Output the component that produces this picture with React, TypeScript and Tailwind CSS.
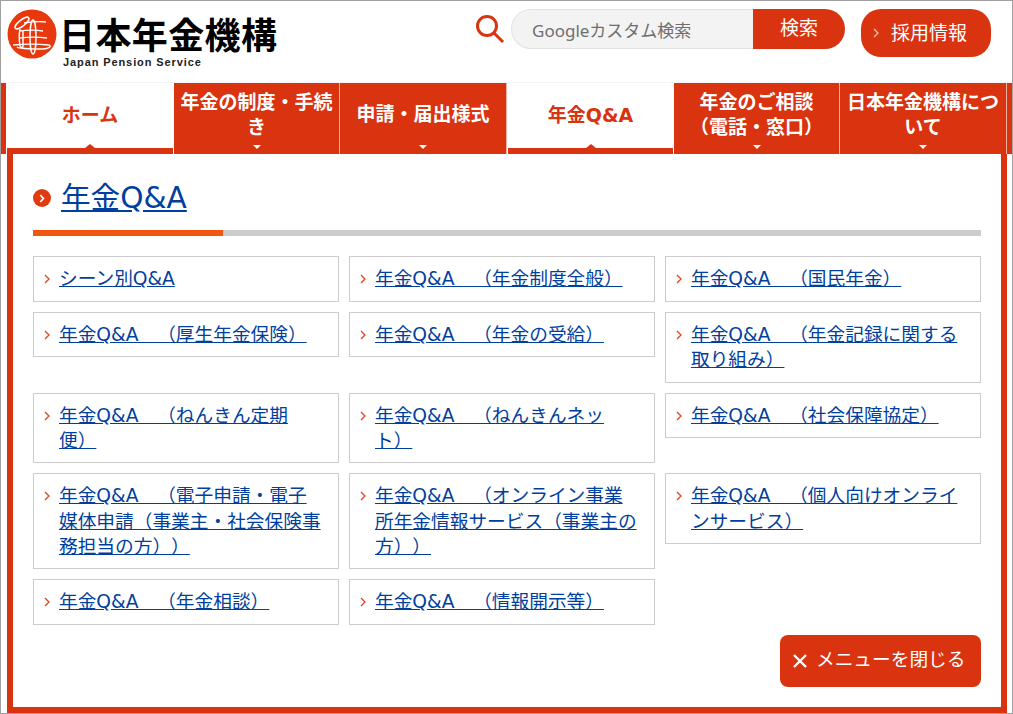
const font = "[font-family:'DejaVu_Sans','Noto_Sans_CJK_JP',sans-serif] [text-spacing-trim:space-all]";

const links: string[][] = [
  ["シーン別Q&A"],
  ["年金Q&A　（年金制度全般）"],
  ["年金Q&A　（国民年金）"],
  ["年金Q&A　（厚生年金保険）"],
  ["年金Q&A　（年金の受給）"],
  ["年金Q&A　（年金記録に関する", "取り組み）"],
  ["年金Q&A　（ねんきん定期", "便）"],
  ["年金Q&A　（ねんきんネッ", "ト）"],
  ["年金Q&A　（社会保障協定）"],
  ["年金Q&A　（電子申請・電子", "媒体申請（事業主・社会保険事", "務担当の方））"],
  ["年金Q&A　（オンライン事業", "所年金情報サービス（事業主の", "方））"],
  ["年金Q&A　（個人向けオンライ", "ンサービス）"],
  ["年金Q&A　（年金相談）"],
  ["年金Q&A　（情報開示等）"],
];

const tabs = [
  { lines: ["ホーム"], active: true, w: "w-[168px]" },
  { lines: ["年金の制度・手続", "き"], active: false, w: "w-[166px]" },
  { lines: ["申請・届出様式"], active: false, w: "w-[167px]" },
  { lines: ["年金Q&A"], active: true, w: "w-[167px]" },
  { lines: ["年金のご相談", "（電話・窓口）"], active: false, w: "w-[166px]" },
  { lines: ["日本年金機構につ", "いて"], active: false, w: "w-[167px]" },
];

function Chevron({ className }: { className: string }) {
  return (
    <svg viewBox="0 0 6 10" className={className} fill="none" stroke="currentColor" strokeWidth="1.3">
      <path d="M1 1l4 4-4 4" />
    </svg>
  );
}

function Logo() {
  return (
    <svg viewBox="0 0 50 50" className="w-[50px] h-[50px] shrink-0">
      <circle cx="25" cy="25" r="24.5" fill="#e8380d" />
      <g fill="none" stroke="#fff" strokeWidth="1.4">
        <ellipse cx="15" cy="14" rx="8.5" ry="3" transform="rotate(-38 15 14)" />
        <path d="M17 14c7-1 15-2 22-1M12 22c8-1 18-1 24 0M13 29c8-1 19-1 27 0" />
        <path d="M6 36c10-1 26-1 36 0 3 1 0 4-6 4-10 0-24 0-26-2" />
        <ellipse cx="26" cy="28" rx="3" ry="17" />
        <path d="M13 20c-1 5-1 11 0 17 1 2 3 2 3 0V21" />
      </g>
    </svg>
  );
}

function Tab({ lines, active, w }: { lines: string[]; active: boolean; w: string }) {
  if (active) {
    return (
      <div className={`${w} relative h-[71px] bg-white flex flex-col`}>
        <div className="flex-1 flex items-center justify-center text-[#d9330f] text-[19px] font-bold pb-[1px]">
          {lines[0]}
        </div>
        <div className="h-[6px] bg-[#d9330f] mx-[1px] relative">
          <span className="absolute left-1/2 -translate-x-1/2 -top-[4px] w-0 h-0 border-x-[5px] border-x-transparent border-b-[4px] border-b-[#d9330f]" />
        </div>
      </div>
    );
  }
  return (
    <div className={`${w} relative h-[71px] bg-[#d9330f] border-r border-r-[#f0b4a4] flex flex-col items-center justify-center text-white text-[19px] font-bold leading-[25px] text-center pb-[8px] whitespace-nowrap`}>
      {lines.map((l) => (
        <div key={l}>{l}</div>
      ))}
      <span className="absolute left-1/2 -translate-x-1/2 bottom-[5px] w-0 h-0 border-x-[4px] border-x-transparent border-t-[4px] border-t-white" />
    </div>
  );
}

export default function App() {
  return (
    <div className={`${font} w-[1013px] h-[714px] bg-white border border-[#a0a0a0] overflow-hidden flex flex-col`}>
      <header className="h-[82px] flex shrink-0 border-b border-b-[#f5f5f5]">
        <div className="pl-[6px] pt-[8px] flex gap-[5px]">
          <Logo />
          <div className="flex flex-col w-[216px]">
            <div className="text-[36px] leading-[36px] mt-[6px] -ml-[3px] font-bold tracking-[0.4px] text-black whitespace-nowrap [font-family:'Noto_Sans_CJK_JP',sans-serif]">日本年金機構</div>
            <div className="text-[11px] leading-[14px] mt-[4px] ml-[1px] font-bold tracking-[0.9px] text-[#222] [font-family:'Liberation_Sans',sans-serif]">Japan Pension Service</div>
          </div>
        </div>
        <div className="ml-[197px] pt-[8px] flex items-start">
          <svg viewBox="0 0 30 30" className="w-[30px] h-[30px] mt-[5px] text-[#d9330f]" fill="none" stroke="currentColor" strokeWidth="3">
            <circle cx="12" cy="12" r="9.5" />
            <path d="M19 19l9 9" />
          </svg>
          <div className="ml-[6px] w-[242px] h-[40px] rounded-l-[20px] bg-[#f3f3f3] border border-[#e2e2e2] border-r-0 text-[#6f6f6f] text-[17px] leading-[41px] pl-[20px] whitespace-nowrap [font-family:'Noto_Sans','Noto_Sans_CJK_JP',sans-serif]">
            Googleカスタム検索
          </div>
          <div className="w-[92px] h-[40px] rounded-r-[20px] bg-[#d9330f] text-white text-[19px] leading-[38px] text-center">
            検索
          </div>
          <div className="ml-[16px] w-[130px] h-[48px] rounded-[20px] bg-[#d9330f] text-white flex items-center pl-[12px] gap-[12px] text-[19px]">
            <Chevron className="w-[6px] h-[10px] text-[#f3c2b5]" />
            採用情報
          </div>
        </div>
      </header>

      <nav className="flex pl-[5px] bg-[#d9330f] shrink-0 h-[71px]">
        {tabs.map((t) => (
          <Tab key={t.lines[0]} {...t} />
        ))}
      </nav>

      <main className="ml-[6px] mr-[5px] h-[559px] border-[6px] border-t-0 border-[#d9330f] pl-[20px] pr-[20px] pt-[26px]">
        <h2 className="flex items-center gap-[10px] h-[36px]">
          <span className="w-[18px] h-[18px] rounded-full bg-[#e03a10] flex items-center justify-center">
            <svg viewBox="0 0 8 10" className="w-[7px] h-[9px]" fill="none" stroke="#fff" strokeWidth="2">
              <path d="M1.5 1l3.5 4-3.5 4" />
            </svg>
          </span>
          <a className="text-[#003f9e] underline text-[29.6px] leading-[36px] -mt-[1px]">年金Q&A</a>
        </h2>
        <div className="mt-[14px] h-[6px] bg-[#cccccc]">
          <div className="w-[190px] h-full bg-[#f1560f]" />
        </div>
        <div className="mt-[20.48px] grid grid-cols-[306px_306px_316px] gap-[10px] items-start">
          {links.map((l) => (
            <div key={l.join("")} className="border border-[#cccccc] relative pl-[25px] pr-[4px] py-[9px] text-[18.7px] leading-[25.35px]">
              <Chevron className="absolute left-[10px] top-[17px] w-[6px] h-[10px] text-[#e0431c]" />
              <a className="text-[#003f9e] underline block whitespace-nowrap">
                {l.map((x) => (
                  <div key={x}>{x}</div>
                ))}
              </a>
            </div>
          ))}
        </div>
        <div className="flex justify-end mt-[10.4px]">
          <div className="w-[201px] h-[52px] rounded-[8px] bg-[#d9330f] text-white flex items-center pl-[13px] pb-[1px] gap-[9px] text-[18.7px] whitespace-nowrap">
            <svg viewBox="0 0 14 14" className="w-[14px] h-[14px] mt-[2px]" fill="none" stroke="#fff" strokeWidth="2.4">
              <path d="M1 1l12 12M13 1L1 13" />
            </svg>
            メニューを閉じる
          </div>
        </div>
      </main>
    </div>
  );
}
